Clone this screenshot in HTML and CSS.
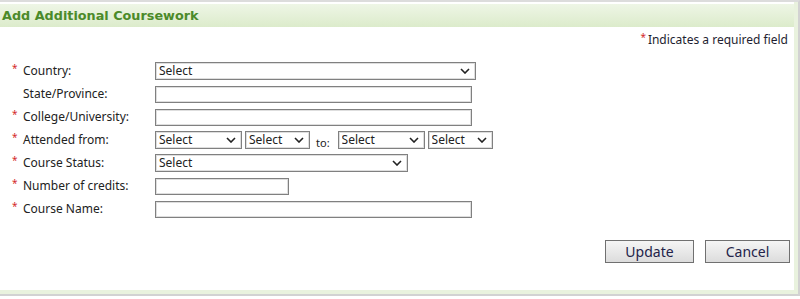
FILE: index.html
```html
<!doctype html>
<html lang="en">
<head>
	<meta charset="UTF-8">
	<title>Add Additional Coursework</title>
	<link rel="stylesheet" href="styles.css">
</head>
<body>
<div class="panel">
	<div class="panel-inner">
		<div class="panel-head">Add Additional Coursework</div>
		<div class="panel-body">
			<p class="req-note"><span class="star">*</span>Indicates a required field</p>

			<div class="form">
				<div class="row">
					<span class="star">*</span>
					<label>Country:</label>
					<div class="field">
						<span class="sel w-country"><select><option>Select</option></select><svg viewBox="0 0 10 6"><path d="M1 1l4 4 4-4"/></svg></span>
					</div>
				</div>
				<div class="row">
					<span class="star"></span>
					<label>State/Province:</label>
					<div class="field"><input type="text" class="w-long"></div>
				</div>
				<div class="row">
					<span class="star">*</span>
					<label>College/University:</label>
					<div class="field"><input type="text" class="w-long"></div>
				</div>
				<div class="row">
					<span class="star">*</span>
					<label>Attended from:</label>
					<div class="field">
						<span class="sel w-month"><select><option>Select</option></select><svg viewBox="0 0 10 6"><path d="M1 1l4 4 4-4"/></svg></span>
						<span class="sel w-year"><select><option>Select</option></select><svg viewBox="0 0 10 6"><path d="M1 1l4 4 4-4"/></svg></span>
						<span class="to">to:</span>
						<span class="sel w-month"><select><option>Select</option></select><svg viewBox="0 0 10 6"><path d="M1 1l4 4 4-4"/></svg></span>
						<span class="sel w-year"><select><option>Select</option></select><svg viewBox="0 0 10 6"><path d="M1 1l4 4 4-4"/></svg></span>
					</div>
				</div>
				<div class="row">
					<span class="star">*</span>
					<label>Course Status:</label>
					<div class="field">
						<span class="sel w-status"><select><option>Select</option></select><svg viewBox="0 0 10 6"><path d="M1 1l4 4 4-4"/></svg></span>
					</div>
				</div>
				<div class="row">
					<span class="star">*</span>
					<label>Number of credits:</label>
					<div class="field"><input type="text" class="w-short"></div>
				</div>
				<div class="row">
					<span class="star">*</span>
					<label>Course Name:</label>
					<div class="field"><input type="text" class="w-long"></div>
				</div>
			</div>

			<div class="actions">
				<button type="button" class="btn btn-update">Update</button>
				<button type="button" class="btn btn-cancel">Cancel</button>
			</div>
		</div>
	</div>
</div>
</body>
</html>
```

FILE: styles.css
```css
body,p{margin:0px;padding:0px;}
body{
	font-family:"Noto Sans","DejaVu Sans",sans-serif;
	font-size:12px;
	color:#222;
	background:#fff;
}

.panel{
	width:798px;
	border-top:2px solid #dcdcdc;
	border-right:2px solid #d2d2d2;
	border-bottom:2px solid #d2d2d2;
}
.panel-inner{
	padding-top:2px;
	border-right:4px solid #e9f2de;
	border-bottom:4px solid #e9f2de;
}
.panel-head{
	height:23px;
	line-height:24px;
	padding-left:2px;
	background:linear-gradient(#eef6e6,#dcebcb);
	color:#4b8a2a;
	font-family:"DejaVu Sans",sans-serif;
	font-weight:bold;
	font-size:12.8px;
}
.panel-body{
	padding-bottom:27px;
}

.star{
	color:#d42a2a;
	font-size:10px;
	position:relative;
	top:-3px;
}
.req-note{
	margin-top:6px;
	height:14px;
	line-height:14px;
	text-align:right;
	padding-right:6px;
	color:#1e1e30;
}
.req-note .star{
	margin-right:2px;
}

.form{
	margin-top:15px;
	display:flex;
	flex-direction:column;
	gap:5px;
}
.row{
	display:grid;
	grid-template-columns:11px 132px 1fr;
	align-items:center;
	height:18px;
	padding-left:12px;
}
.row label{
	line-height:14px;
}
.field{
	display:flex;
	align-items:center;
	gap:3px;
}

input,select{
	font-family:"Noto Sans","DejaVu Sans",sans-serif;
	font-size:12px;
	color:#222;
	box-sizing:border-box;
	border:1px solid #808080;
	box-shadow:inset 0 0 0 1px #dedede;
	background:#fff;
	border-radius:0;
	margin:0;
	outline:none;
}
input{
	height:17px;
	padding:0 3px;
}
select{
	appearance:none;
	-webkit-appearance:none;
	width:100%;
	height:18px;
	padding:0 3px;
	line-height:16px;
}
.sel{
	position:relative;
	display:block;
}
.sel svg{
	position:absolute;
	right:6px;
	top:6px;
	width:10px;
	height:6px;
	fill:none;
	stroke:#222;
	stroke-width:1.6;
	pointer-events:none;
}

.w-country{width:321px;}
.w-long{width:317px;}
.w-short{width:134px;}
.w-status{width:253px;}
.w-month{width:87px;}
.w-year{width:65px;}
.to{
	margin:0 5px 0 3px;
	font-size:11px;
	position:relative;
	top:2px;
}

.actions{
	margin-top:22px;
	display:flex;
	justify-content:flex-end;
	gap:11px;
	padding-right:4px;
}
.btn{
	height:23px;
	border:1px solid #707070;
	background:linear-gradient(#f5f5f5,#dcdcdc);
	color:#23234a;
	font-family:"Noto Sans","DejaVu Sans",sans-serif;
	font-size:14px;
	padding:0;
	border-radius:0;
}
.btn-update{width:89px;}
.btn-cancel{width:85px;}
```
